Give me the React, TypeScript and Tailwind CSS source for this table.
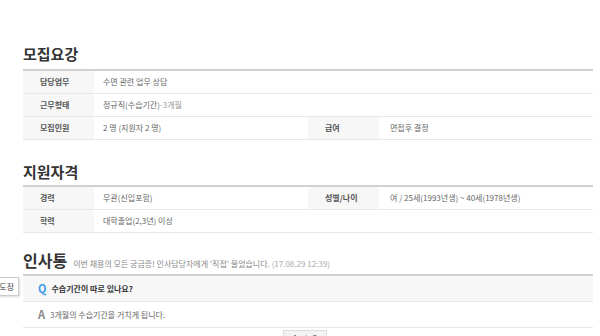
const font = { fontFamily: '"Noto Sans CJK KR", "Noto Sans", sans-serif' };

type Cell = { label: string; value: React.ReactNode };

function Row({ left, right }: { left: Cell; right?: Cell }) {
  return (
    <div className="flex h-[23px] border-b border-[#e8e8e8] text-[8px] leading-none">
      <div className="flex w-[285px] items-center">
        <div className="flex h-full w-[71px] shrink-0 items-center bg-[#f7f7f7] pl-[17px] font-bold text-[#555]">
          {left.label}
        </div>
        <div className="pl-[9px] text-[#666]">{left.value}</div>
      </div>
      {right && (
        <div className="flex flex-1 items-center">
          <div className="flex h-full w-[71px] shrink-0 items-center bg-[#f7f7f7] pl-[17px] font-bold text-[#555]">
            {right.label}
          </div>
          <div className="pl-[11px] text-[#666]">{right.value}</div>
        </div>
      )}
    </div>
  );
}

function Title({ children }: { children: React.ReactNode }) {
  return <h2 className="text-[15px] font-bold leading-none text-[#333]">{children}</h2>;
}

export default function App() {
  return (
    <div className="relative h-[336px] w-[600px] overflow-hidden bg-white" style={font}>
      <div className="pl-[23px] pr-[7px] pt-[46px]">
        <Title>모집요강</Title>
        <div className="mt-[8px] border-t-2 border-[#d0d0d0]">
          <Row left={{ label: '담당업무', value: '수면 관련 업무 상담' }} />
          <Row
            left={{
              label: '근무형태',
              value: (
                <>
                  정규직(수습기간)<span className="text-[#999]">-3개월</span>
                </>
              ),
            }}
          />
          <Row
            left={{ label: '모집인원', value: '2 명 (지원자 2 명)' }}
            right={{ label: '급여', value: '면접후 결정' }}
          />
        </div>

        <div className="mt-[24px]">
          <Title>지원자격</Title>
        </div>
        <div className="mt-[6px] border-t-2 border-[#d0d0d0]">
          <Row
            left={{ label: '경력', value: '무관(신입포함)' }}
            right={{ label: '성별/나이', value: '여 / 25세(1993년생) ~ 40세(1978년생)' }}
          />
          <Row left={{ label: '학력', value: '대학졸업(2,3년) 이상' }} />
        </div>

        <div className="mt-[19px] flex items-end gap-[6px]">
          <h2 className="text-[16px] font-bold leading-none text-[#333]">인사통</h2>
          <p className="text-[8px] leading-none text-[#888]">
            이번 채용의 모든 궁금증! 인사담당자에게 '직접' 물었습니다.{' '}
            <span className="text-[#aaa]">(17.08.29 12:39)</span>
          </p>
        </div>
        <div className="mt-[6px] border-t-2 border-[#d0d0d0]">
          <div className="flex h-[26px] items-center gap-[5px] border-b border-[#e8e8e8] bg-[#f7f7f7] pl-[15px]">
            <span className="text-[11px] font-bold text-[#3d9be9]">Q</span>
            <span className="text-[8px] font-bold text-[#333]">수습기간이 따로 있나요?</span>
          </div>
          <div className="flex h-[26px] items-center gap-[5px] border-b border-[#e8e8e8] pl-[15px]">
            <span className="text-[11px] font-bold text-[#888]">A</span>
            <span className="text-[8px] text-[#666]">3개월의 수습기간을 거치게 됩니다.</span>
          </div>
          <div className="ml-[260px] mt-[2px] flex h-[14px] w-[44px] items-start justify-center gap-[6px] border border-[#ddd] bg-[#f3f3f3] pt-[3px] text-[8px] leading-none text-[#666]">
            <span>1</span>
            <span>/</span>
            <span>5</span>
          </div>
        </div>
      </div>

      <div className="absolute left-[-8px] top-[277px] flex h-[19px] w-[27px] items-center justify-end border border-[#ccc] bg-white pr-[4px] text-[8px] text-[#444] shadow-[1px_1px_2px_rgba(0,0,0,0.15)]">
        도장
      </div>
    </div>
  );
}
